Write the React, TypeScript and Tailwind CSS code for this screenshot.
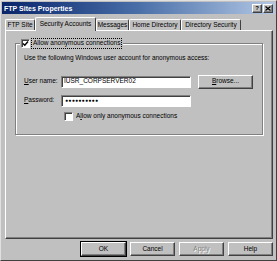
import React from 'react';

const tabs = [
  { label: 'FTP Site', w: 'w-[30px]' },
  { label: 'Security Accounts', w: 'w-[61px]', active: true },
  { label: 'Messages', w: 'w-[33px]' },
  { label: 'Home Directory', w: 'w-[52px]' },
  { label: 'Directory Security', w: 'w-[60px]' },
];

const raised =
  'border border-t-white border-l-white border-r-[#404040] border-b-[#404040] shadow-[inset_-1px_-1px_0_#808080]';
const sunken =
  'border border-t-[#808080] border-l-[#808080] border-r-white border-b-white shadow-[inset_1px_1px_0_#404040]';

const Check = ({ checked }: { checked?: boolean }) => (
  <div className={`w-[9px] h-[9px] bg-white flex items-center justify-center ${sunken}`}>
    {checked && (
      <svg width="7" height="7" viewBox="0 0 7 7">
        <path d="M1 3.5 L2.8 5.3 L6 1.5" stroke="#000" strokeWidth="1.4" fill="none" />
      </svg>
    )}
  </div>
);

const Btn = ({ label, def, disabled }: { label: string; def?: boolean; disabled?: boolean }) => (
  <div className={`w-[45px] h-[14px] ${def ? 'outline outline-1 outline-black' : ''}`}>
    <div
      className={`w-full h-full flex items-center justify-center ${raised} ${
        disabled ? 'text-[#808080] [text-shadow:1px_1px_0_#fff]' : ''
      }`}
    >
      {label}
    </div>
  </div>
);

export default function App() {
  return (
    <div className="w-[277px] h-[261px] bg-[#c0c0c0] border border-t-[#e0e0e0] border-l-[#e0e0e0] border-r-[#404040] border-b-[#404040] p-[1px] flex flex-col font-['Liberation_Sans',Arial,sans-serif] text-[6.5px] text-black leading-none">
      {/* title bar */}
      <div className="h-[12px] flex items-center justify-between pl-[2px] pr-[2px] bg-gradient-to-r from-[#0a246a] via-[#4a6fa8] to-[#b4c8e4]">
        <span className="text-white font-bold text-[7px]">FTP Sites Properties</span>
        <div className="flex gap-[1px]">
          <div className={`w-[10px] h-[9px] bg-[#c0c0c0] flex items-center justify-center font-bold text-[6px] ${raised}`}>?</div>
          <div className={`w-[10px] h-[9px] bg-[#c0c0c0] flex items-center justify-center ${raised}`}>
            <svg width="6" height="5" viewBox="0 0 6 5">
              <path d="M0.5 0.5 L5.5 4.5 M5.5 0.5 L0.5 4.5" stroke="#000" strokeWidth="1.2" />
            </svg>
          </div>
        </div>
      </div>

      {/* tabs */}
      <div className="mt-[3px] ml-[3px] h-[13px] flex items-end relative z-10">
        {tabs.map((t) =>
          t.active ? (
            <div
              key={t.label}
              className={`${t.w} h-[14px] -mb-[1px] bg-[#c0c0c0] border-t border-l border-r border-t-white border-l-white border-r-[#404040] rounded-t-[2px] flex items-center justify-center pb-[1px]`}
            >
              {t.label}
            </div>
          ) : (
            <div
              key={t.label}
              className={`${t.w} h-[11px] border-t border-l border-r border-t-white border-l-white border-r-[#404040] rounded-t-[2px] flex items-center justify-center`}
            >
              {t.label}
            </div>
          )
        )}
      </div>

      {/* tab panel */}
      <div className={`ml-[3px] mr-[2px] h-[209px] pt-[12px] px-[9px] ${raised}`}>
        <div className="relative h-[92px] border border-[#808080] shadow-[inset_1px_1px_0_#fff,1px_1px_0_#fff] pl-[8px] pt-[11px] flex flex-col">
          <div className="absolute -top-[6px] left-[4px] flex items-center gap-[1px] bg-[#c0c0c0] pl-[1px] pr-[1px]">
            <Check checked />
            <span className="border border-dotted border-black px-[1px] py-[1px]">Allow anonymous connections</span>
          </div>
          <div>Use the following Windows user account for anonymous access:</div>

          <div className="mt-[13px] flex items-center">
            <span className="w-[37px]">
              <span className="underline">U</span>ser name:
            </span>
            <div className={`w-[130px] h-[12px] bg-white flex items-center pl-[2px] ${sunken}`}>IUSR_CORPSERVER02</div>
            <div className="ml-[7px]">
              <div className={`w-[55px] h-[14px] flex items-center justify-center ${raised}`}>
                <span>
                  <span className="underline">B</span>rowse...
                </span>
              </div>
            </div>
          </div>

          <div className="mt-[6px] flex items-center">
            <span className="w-[37px]">
              <span className="underline">P</span>assword:
            </span>
            <div className={`w-[130px] h-[12px] bg-white flex items-center pl-[3px] text-[5px] tracking-[0.3px] ${sunken}`}>●●●●●●●●●●</div>
          </div>

          <div className="mt-[5px] ml-[40px] flex items-center gap-[3px]">
            <Check />
            <span>
              A<span className="underline">l</span>low only anonymous connections
            </span>
          </div>
        </div>
      </div>

      {/* buttons */}
      <div className="mt-[3px] mr-[2px] flex justify-end gap-[4px]">
        <Btn label="OK" def />
        <Btn label="Cancel" />
        <Btn label="Apply" disabled />
        <Btn label="Help" />
      </div>
    </div>
  );
}
